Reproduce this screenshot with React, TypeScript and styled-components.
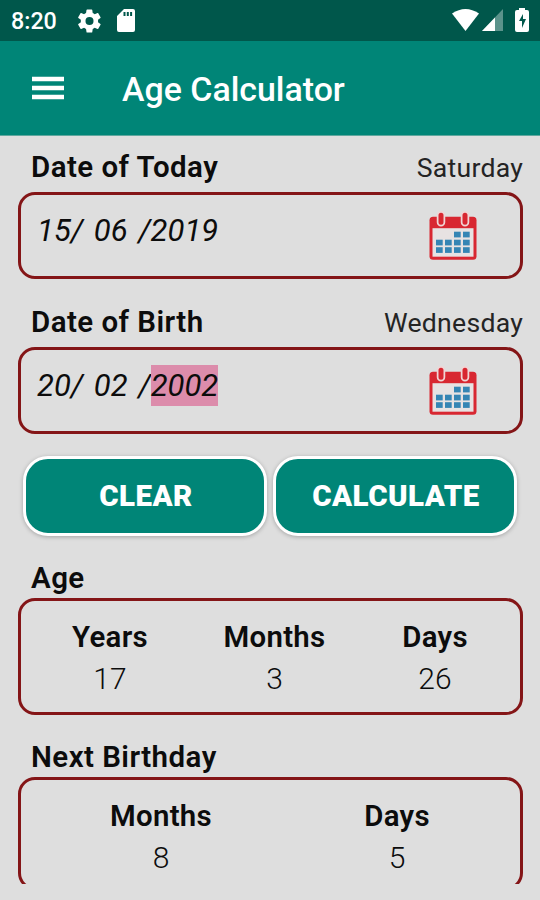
import React from 'react';
import styled, { createGlobalStyle } from 'styled-components';

const Global = createGlobalStyle`
  * { box-sizing: border-box; }
  body { margin: 0; background: #dedede; font-family: Roboto, "Liberation Sans", sans-serif; color: #0c0c0c; }
`;
const Screen = styled.div`
  width: 540px; height: 900px; overflow: hidden; display: flex; flex-direction: column; background: #dedede;
`;
const StatusBar = styled.header`
  height: 41px; flex: none; background: #00574b; display: flex; align-items: center; padding: 0 11px 0 11px; color: #fff;
`;
const Clock = styled.span`
  font-size: 23.3px; font-weight: 550; line-height: 41px; width: 67px; padding-top: 2px; white-space: nowrap;
`;
const StatusIcons = styled.div`
  display: flex; align-items: center; gap: 16px;
`;
const SystemIcons = styled.div`
  display: flex; align-items: center; margin-left: auto; padding-bottom: 1px;
`;
const AppBar = styled.div`
  height: 95px; flex: none; background: #008577; display: flex; align-items: center; padding: 0 32px; gap: 58px; color: #fff;
  border-bottom: 1px solid #5fa79e;
`;
const Title = styled.h1`
  margin: 3px 0 0; font-size: 33.9px; font-weight: 500; line-height: 40px; white-space: nowrap;
`;
const Content = styled.main`
  height: 748px; overflow: hidden; padding: 11px 17px 0 18px;
`;
const Heading = styled.div<{ $top?: number; $height?: number }>`
  display: flex; justify-content: space-between; align-items: flex-start; height: ${p => p.$height ?? 45}px; padding-left: 13px;
  margin-top: ${p => p.$top ?? 0}px;
`;
const Label = styled.h2`
  margin: 2px 0 0; font-size: 29.5px; font-weight: 600; line-height: 36px; letter-spacing: 0.45px; white-space: nowrap;
`;
const Weekday = styled.span`
  margin-top: 4px; font-size: 26.6px; line-height: 34px; letter-spacing: 0.25px; color: #242424;
`;
const Panel = styled.section<{ $h: number }>`
  height: ${p => p.$h}px; border: 3px solid #841517; border-radius: 17px; display: flex;
`;
const DateText = styled.div`
  flex: 1; padding: 15px 0 0 16px; font-size: 31px; font-weight: 400; font-style: italic; line-height: 41px;
  word-spacing: 3px; white-space: pre;
`;
const Selected = styled.span`
  display: inline-block; height: 41px; background: #dc8cab;
`;
const CalendarButton = styled.button`
  display: block; border: 0; padding: 0; margin: 15px 42px 0 0; background: none; width: 50px; height: 52px;
`;
const Actions = styled.div`
  display: flex; gap: 6px; margin: 22px 6px 0 5px; height: 80px;
`;
const Action = styled.button`
  flex: 1; border: 3px solid #fff; border-radius: 25px; background: #008577; color: #fff;
  font: 900 29.5px Roboto, sans-serif; letter-spacing: 0.5px; box-shadow: 0 1px 4px #0004; padding: 0 0 0 2px;
`;
const Stat = styled.div<{ $w: number }>`
  width: ${p => p.$w}px; text-align: center; padding-top: 16px; font-size: 30px; font-weight: 300; line-height: 41px;
`;
const StatName = styled.div`
  font-size: 29.4px; font-weight: 600; letter-spacing: 0.3px;
`;

const Gear = () => (
  <svg width="23" height="24" viewBox="2 2 20 20" fill="currentColor"><path d="M19.4 13a7.5 7.5 0 0 0 0-2l2.1-1.6c.2-.1.2-.4.1-.6l-2-3.500c-.1-.2-.4-.3-.6-.2l-2.500 1a8 8 0 0 0-1.700-1l-.4-2.600c0-.3-.2-.5-.5-.5h-4c-.2 0-.4.2-.5.5L9 5.100a8 8 0 0 0-1.700 1l-2.500-1c-.2-.1-.5 0-.6.2l-2 3.500c-.1.2-.1.5.1.6L4.500 11a7.500 7.500 0 0 0 0 2l-2.200 1.600c-.2.1-.2.4-.1.6l2 3.500c.1.2.4.3.6.2l2.500-1 1.700 1 .4 2.600c0 .3.2.5.5.5h4c.3 0 .5-.2.5-.5l.4-2.600 1.700-1 2.500 1c.2.1.5 0 .6-.2l2-3.500c.1-.2.1-.5-.1-.6zM12 15.500a3.500 3.500 0 1 1 0-7 3.500 3.500 0 0 1 0 7z" /></svg>
);
const Card = () => (
  <svg width="18" height="23" viewBox="0 0 18 23" fill="currentColor"><path fillRule="evenodd" d="M7 0h9q2 0 2 2v19q0 2-2 2H2q-2 0-2-2V7zM6.500 3v4h2v-4zm3.300 0v4h2v-4zm3.300 0v4h2v-4z" /></svg>
);
const cells = [[26, 21], [35, 21], [8, 29], [17, 29], [26, 29], [35, 29], [8, 36.5], [17, 36.5], [26, 36.5], [35, 36.5]];
const Calendar = () => (
  <svg width="50" height="52" viewBox="0 -0.700 50 52">
    <rect x="1.500" y="6" width="47" height="43" rx="3.500" fill="#d82731" />
    <rect x="4.500" y="17.500" width="41" height="28.500" fill="#e7e2e2" />
    <path d="M13 4.500v7M37 4.500v7" stroke="#f0d5d5" strokeWidth="8.500" strokeLinecap="round" />
    <path d="M13 4.500v7M37 4.500v7" stroke="#d82731" strokeWidth="5" strokeLinecap="round" />
    <g fill="#3585b4">{cells.map(([x, y]) => <rect key={`${x}-${y}`} x={x} y={y} width="6.700" height="5.700" />)}</g>
  </svg>
);

const DateField = ({ label, weekday, children, top }: { label: string; weekday: string; children: React.ReactNode; top?: number }) => (
  <>
    <Heading $top={top}><Label>{label}</Label><Weekday>{weekday}</Weekday></Heading>
    <Panel $h={87}><DateText>{children}</DateText><CalendarButton aria-label="Choose date"><Calendar /></CalendarButton></Panel>
  </>
);
const Value = ({ name, value, width }: { name: string; value: number; width: number }) => (
  <Stat $w={width}><StatName>{name}</StatName>{value}</Stat>
);

export default function App() {
  return (
    <Screen>
      <Global />
      <StatusBar>
        <Clock>8:20</Clock>
        <StatusIcons><Gear /><Card /></StatusIcons>
        <SystemIcons>
          <svg width="27" height="22" viewBox="0 0 27 22" fill="currentColor"><path d="M0 4.500Q13.500-4.500 27 4.500L13.500 22z" /></svg>
          <svg width="25" height="22" viewBox="-3 0 25 22"><path d="M21 0v22H0z" fill="#5b938b" /><path d="M13 8.500v13.500H0z" fill="#fff" /></svg>
          <svg width="25" height="24" viewBox="-11 0 25 24"><path fillRule="evenodd" fill="#fff" d="M4 0h6v2h2q2 0 2 2v18q0 2-2 2H2q-2 0-2-2V4q0-2 2-2h2zM8 6l-4 7h3v7l4-9H8z" /></svg>
        </SystemIcons>
      </StatusBar>
      <AppBar>
        <svg width="32" height="24" viewBox="0 0 32 24"><path d="M0 3h32M0 12h32M0 21h32" stroke="#fff" strokeWidth="4.500" /></svg>
        <Title>Age Calculator</Title>
      </AppBar>
      <Content>
        <DateField label="Date of Today" weekday="Saturday">15/ 06 /2019</DateField>
        <DateField label="Date of Birth" weekday="Wednesday" top={23}>20/ 02 /<Selected>2002</Selected></DateField>
        <Actions><Action>CLEAR</Action><Action>CALCULATE</Action></Actions>
        <Heading $top={22} $height={40}><Label>Age</Label></Heading>
        <Panel $h={117}><Value name="Years" value={17} width={178} /><Value name="Months" value={3} width={151} /><Value name="Days" value={26} width={170} /></Panel>
        <Heading $top={22} $height={40}><Label>Next Birthday</Label></Heading>
        <Panel $h={113}><Value name="Months" value={8} width={280} /><Value name="Days" value={5} width={192} /></Panel>
      </Content>
    </Screen>
  );
}
